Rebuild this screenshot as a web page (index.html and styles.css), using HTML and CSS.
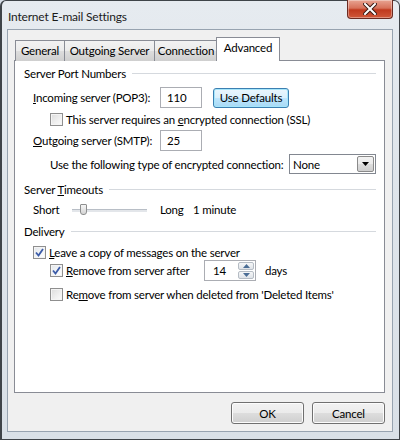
FILE: index.html
```html
<!DOCTYPE html>
<html lang="en">
<head>
    <meta charset="UTF-8">
    <title>Internet E-mail Settings</title>
    <link rel="stylesheet" href="styles.css">
</head>
<body>
    <div class="window">
        <div class="titlebar">
            <span class="title">Internet E-mail Settings</span>
            <div class="close-btn">
                <svg width="14" height="12" viewBox="0 0 14 12">
                    <path d="M2 1 L12 11 M12 1 L2 11" stroke="#3a1a14" stroke-width="4" stroke-linecap="square"/>
                    <path d="M2 1 L12 11 M12 1 L2 11" stroke="#ffffff" stroke-width="2" stroke-linecap="square"/>
                </svg>
            </div>
        </div>

        <div class="client">
            <div class="tabs">
                <div class="tab tab-general">General</div>
                <div class="tab tab-outgoing">Outgoing Server</div>
                <div class="tab tab-connection">Connection</div>
                <div class="tab tab-advanced active">Advanced</div>
            </div>

            <div class="panel">
                <!-- Server port numbers -->
                <div class="group-header"><span>Server Port Numbers</span><div class="rule"></div></div>

                <div class="row row-incoming">
                    <label class="field-label"><u>I</u>ncoming server (POP3):</label>
                    <div class="textbox port">110</div>
                    <div class="button defaults">Use Defaults</div>
                </div>

                <div class="row row-ssl">
                    <span class="checkbox"></span>
                    <span>This server requires an <u>e</u>ncrypted connection (SSL)</span>
                </div>

                <div class="row row-outgoing">
                    <label class="field-label"><u>O</u>utgoing server (SMTP):</label>
                    <div class="textbox port">25</div>
                </div>

                <div class="row row-encrypt">
                    <span class="encrypt-label">Use the following type of encrypted connection:</span>
                    <div class="select">
                        <span class="select-value">None</span>
                        <span class="select-arrow">
                            <svg width="7" height="4" viewBox="0 0 7 4"><path d="M0 0 H7 L3.5 4 Z" fill="#000"/></svg>
                        </span>
                    </div>
                </div>

                <!-- Server timeouts -->
                <div class="group-header header-timeouts"><span>Server <u>T</u>imeouts</span><div class="rule"></div></div>

                <div class="row row-slider">
                    <span class="short">Short</span>
                    <div class="slider">
                        <div class="track"></div>
                        <div class="thumb"></div>
                    </div>
                    <span class="long">Long</span>
                    <span>1 minute</span>
                </div>

                <!-- Delivery -->
                <div class="group-header header-delivery"><span>Delivery</span><div class="rule"></div></div>

                <div class="row row-leave">
                    <span class="checkbox checked">
                        <svg width="9" height="9" viewBox="0 0 9 9"><path d="M1 4.5 L3.5 7.5 L8 1" fill="none" stroke="#3b5ba8" stroke-width="1.8"/></svg>
                    </span>
                    <span><u>L</u>eave a copy of messages on the server</span>
                </div>

                <div class="row row-remove-after">
                    <span class="checkbox checked">
                        <svg width="9" height="9" viewBox="0 0 9 9"><path d="M1 4.5 L3.5 7.5 L8 1" fill="none" stroke="#3b5ba8" stroke-width="1.8"/></svg>
                    </span>
                    <span class="remove-after-label"><u>R</u>emove from server after</span>
                    <div class="spin">
                        <span class="spin-value">14</span>
                        <div class="spin-buttons">
                            <div class="spin-btn"><svg width="7" height="4" viewBox="0 0 7 4"><path d="M0 4 H7 L3.5 0 Z" fill="#4b6d95"/></svg></div>
                            <div class="spin-btn"><svg width="7" height="4" viewBox="0 0 7 4"><path d="M0 0 H7 L3.5 4 Z" fill="#4b6d95"/></svg></div>
                        </div>
                    </div>
                    <span class="days">days</span>
                </div>

                <div class="row row-remove-deleted">
                    <span class="checkbox"></span>
                    <span>Re<u>m</u>ove from server when deleted from 'Deleted Items'</span>
                </div>
            </div>

            <div class="footer">
                <div class="button dialog-btn">OK</div>
                <div class="button dialog-btn">Cancel</div>
            </div>
        </div>
    </div>
</body>
</html>
```

FILE: styles.css
```css
body {
    margin: 0;
    width: 400px;
    height: 440px;
    overflow: hidden;
    background-color: #d6dde6;
    font-family: 'Lato', 'Liberation Sans', sans-serif;
    font-size: 11.5px;
    letter-spacing: -0.2px;
    color: #000000;
    white-space: nowrap;
}

u {
    text-decoration: underline;
    text-underline-offset: 1px;
}

.window {
    box-sizing: border-box;
    width: 400px;
    height: 440px;
    display: flex;
    flex-direction: column;
    border: 1px solid #3f4449;
    border-left-width: 2px;
    border-radius: 6px 6px 0 0;
    background: linear-gradient(to bottom, #e6ebf0 0%, #dfe5eb 40%, #d9e0e7 100%);
}

.titlebar {
    height: 28px;
    display: flex;
    align-items: flex-start;
    padding-left: 6px;
}

.title {
    margin-top: 8px;
    font-size: 12px;
    color: #1b1b1b;
}

.close-btn {
    margin-left: auto;
    margin-right: 6px;
    width: 44px;
    height: 18px;
    margin-top: -1px;
    display: flex;
    align-items: center;
    justify-content: center;
    border: 1px solid #6b2b22;
    border-top: none;
    border-radius: 0 0 4px 4px;
    background: linear-gradient(to bottom, #e8a493 0%, #d7715a 45%, #c0391e 55%, #d0583a 100%);
    box-shadow: inset 0 0 0 1px rgba(255, 255, 255, 0.35);
}

.client {
    flex: 1;
    display: flex;
    flex-direction: column;
    margin: 0 6px 7px 5px;
    padding: 7px 7px 0 6px;
    border: 1px solid #97a3b0;
    background-color: #f0f0f0;
}

/* tabs */
.tabs {
    display: flex;
    align-items: flex-end;
    height: 24px;
    margin-bottom: -1px;
    padding-left: 1px;
    position: relative;
    z-index: 1;
}

.tab {
    box-sizing: border-box;
    height: 21px;
    padding: 3px 0 0 0;
    text-align: center;
    border: 1px solid #898c95;
    border-bottom: none;
    margin-right: -1px;
    background: linear-gradient(to bottom, #f2f2f2 0%, #ebebeb 50%, #dddddd 51%, #cfcfcf 100%);
}

.tab-general { width: 50px; }
.tab-outgoing { width: 91px; }
.tab-connection { width: 64px; }

.tab.active {
    width: 64px;
    height: 24px;
    padding-top: 3px;
    margin-left: -1px;
    background: #ffffff;
}

.panel {
    height: 333px;
    box-sizing: border-box;
    padding: 5px 8px 0 9px;
    border: 1px solid #898c95;
    background-color: #ffffff;
}

.group-header {
    display: flex;
    align-items: center;
    height: 15px;
}

.group-header .rule {
    flex: 1;
    height: 1px;
    margin-left: 6px;
    background-color: #d5d9de;
}

.header-timeouts { margin-top: 8px; }
.header-delivery { margin-top: 7px; }

.row {
    display: flex;
    align-items: center;
    height: 15px;
}

.field-label {
    width: 127px;
    margin-left: 9px;
}

.textbox {
    box-sizing: border-box;
    height: 21px;
    padding: 3px 0 0 6px;
    border: 1px solid #abadb3;
    background-color: #ffffff;
}

.port { width: 42px; }

.button {
    box-sizing: border-box;
    display: flex;
    align-items: center;
    justify-content: center;
    border: 1px solid #707070;
    border-radius: 3px;
    background: linear-gradient(to bottom, #f2f2f2 0%, #ebebeb 50%, #dddddd 51%, #cfcfcf 100%);
    box-shadow: inset 0 0 0 1px #fcfcfc;
}

.defaults {
    width: 76px;
    height: 20px;
    margin-left: 11px;
    border-color: #3c7fb1;
    background: linear-gradient(to bottom, #eaf6fd 0%, #d9f0fc 50%, #bee6fd 51%, #a7d9f5 100%);
    box-shadow: inset 0 0 0 1px #a5e6fb;
}

.row-incoming { height: 21px; margin-top: 6px; }
.row-ssl { margin-top: 4px; padding-left: 26px; }
.row-outgoing { height: 21px; margin-top: 3px; }
.row-encrypt { height: 20px; margin-top: 3px; padding-left: 26px; }

.checkbox {
    box-sizing: border-box;
    width: 13px;
    height: 13px;
    margin-right: 3px;
    display: flex;
    align-items: center;
    justify-content: center;
    border: 1px solid #8f8f8f;
    background: linear-gradient(135deg, #dcdcdc 0%, #f0f0f0 60%, #fbfbfb 100%);
    box-shadow: inset 0 0 0 1px #f4f4f4;
}

.checkbox.checked {
    background: linear-gradient(135deg, #e2e6ea 0%, #f4f6f8 60%, #ffffff 100%);
}

.encrypt-label { width: 239px; }

.select {
    box-sizing: border-box;
    width: 87px;
    height: 20px;
    display: flex;
    align-items: center;
    border: 1px solid #828790;
    background-color: #ffffff;
}

.select-value {
    flex: 1;
    padding-left: 3px;
}

.select-arrow {
    box-sizing: border-box;
    width: 17px;
    height: 16px;
    margin-right: 1px;
    display: flex;
    align-items: center;
    justify-content: center;
    border: 1px solid #8a8a8a;
    border-radius: 2px;
    background: linear-gradient(to bottom, #f2f2f2 0%, #ebebeb 50%, #dddddd 51%, #cfcfcf 100%);
}

.row-slider { margin-top: 5px; padding-left: 9px; }

.short { width: 39px; }

.slider {
    position: relative;
    width: 75px;
    height: 15px;
    margin-right: 13px;
}

.track {
    position: absolute;
    left: 0;
    right: 0;
    top: 7px;
    height: 2px;
    background-color: #e3e6ea;
    border-top: 1px solid #b8bec6;
}

.thumb {
    position: absolute;
    left: 8px;
    top: 2px;
    width: 5px;
    height: 9px;
    border: 1px solid #8e8f8f;
    border-radius: 1px 1px 3px 3px;
    background: linear-gradient(to bottom, #f5f5f5, #d4d4d4);
}

.long { width: 33px; }

.row-leave { margin-top: 6px; padding-left: 9px; }
.row-remove-after { height: 21px; padding-left: 26px; }
.row-remove-deleted { margin-top: 6px; padding-left: 26px; }

.remove-after-label { width: 138px; }

.spin {
    box-sizing: border-box;
    width: 52px;
    height: 21px;
    display: flex;
    border: 1px solid #abadb3;
    background-color: #ffffff;
}

.spin-value {
    flex: 1;
    padding: 3px 0 0 8px;
}

.spin-buttons {
    width: 16px;
    display: flex;
    flex-direction: column;
    gap: 1px;
    padding: 1px 1px 1px 0;
}

.spin-btn {
    flex: 1;
    display: flex;
    align-items: center;
    justify-content: center;
    border: 1px solid #b5bcc4;
    border-radius: 2px;
    background: linear-gradient(to bottom, #f6f7f8, #dfe3e8);
}

.days { margin-left: 9px; }

.footer {
    display: flex;
    justify-content: flex-end;
    gap: 8px;
    padding-top: 9px;
}

.dialog-btn {
    width: 73px;
    height: 22px;
}
```
